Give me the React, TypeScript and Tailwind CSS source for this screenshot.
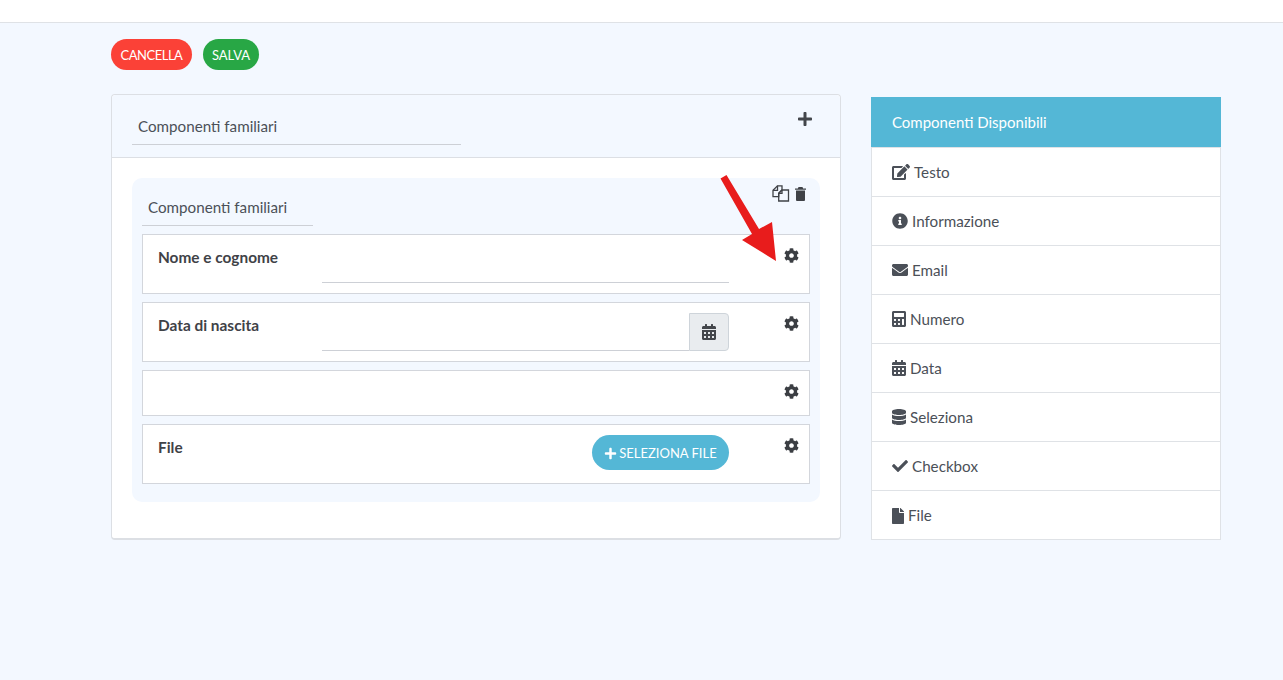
import type { ReactNode } from 'react';
import { FaCalculator, FaCalendarAlt, FaCheck, FaCog, FaDatabase, FaEdit, FaEnvelope, FaFile, FaInfoCircle, FaPlus } from 'react-icons/fa';

const available = [
  { label: 'Testo', icon: <FaEdit className="w-[18px] h-[16px]" /> },
  { label: 'Informazione', icon: <FaInfoCircle className="w-[16px] h-[16px]" /> },
  { label: 'Email', icon: <FaEnvelope className="w-[16px] h-[16px]" /> },
  { label: 'Numero', icon: <FaCalculator className="w-[14px] h-[16px]" /> },
  { label: 'Data', icon: <FaCalendarAlt className="w-[14px] h-[16px]" /> },
  { label: 'Seleziona', icon: <FaDatabase className="w-[14px] h-[16px]" /> },
  { label: 'Checkbox', icon: <FaCheck className="w-[16px] h-[16px]" /> },
  { label: 'File', icon: <FaFile className="w-[12px] h-[16px]" /> },
];

const CopyIcon = () => (
  <svg width="18" height="17" viewBox="0 0 18 17" fill="none" stroke="currentColor" strokeWidth="1.3">
    <path d="M5.5 .8h4.5v4.2L6.7 8.3v3.4H1V5.3z" />
    <path d="M5.5 .8v4.5H1" />
    <path d="M10 5h6.5v11H6.7V8.3z" />
    <path d="M10 5v3.3H6.7" />
  </svg>
);

const TrashIcon = () => (
  <svg width="11" height="14" viewBox="0 0 11 14" fill="currentColor">
    <path d="M3.5 0h4l.6 1.5H11v1.3H0V1.5h2.9z" />
    <path d="M1 3.6h9V13a1 1 0 0 1-1 1H2a1 1 0 0 1-1-1z" />
  </svg>
);

const Row = ({ label, height, children }: { label?: string; height: string; children?: ReactNode }) => (
  <div className={`relative flex bg-white border border-[#d3d6dc] ${height}`}>
    {label && <div className="w-[179px] shrink-0 pl-[15px] pt-[11px] text-[15.4px] leading-[22px] font-bold text-[#3f4247]">{label}</div>}
    {children}
    <FaCog size={15} className="absolute top-[13px] right-[10px] text-[#3b3e43]" />
  </div>
);

export default function App() {
  return (
    <div className="min-h-[680px] bg-[#f3f8ff] text-[#4b5058] [font-family:Lato,'Open_Sans',sans-serif]">
      <div className="h-[23px] bg-white border-b border-[#dfe2e6]" />

      <div className="relative pl-[111px] pt-[16px]">
        <div className="flex gap-[11px]">
          <button className="h-[31px] w-[81px] pt-[2px] rounded-full bg-[#fb4137] text-[13px] tracking-[-0.5px] text-white">CANCELLA</button>
          <button className="h-[31px] w-[56px] pt-[2px] rounded-full bg-[#28a745] text-[13px] text-white">SALVA</button>
        </div>

        <div className="flex items-start gap-[30px] mt-[24px]">
          <div className="w-[730px] h-[446px] rounded-[4px] bg-white border border-[#dcdfe4] border-b-2">
            <div className="relative h-[63px] bg-[#f3f8ff] border-b border-[#dcdfe4] pl-[20px] pt-[17px] rounded-t-[4px]">
              <div className="w-[329px] h-[33px] border-b border-[#cdd0d6] pl-[6px] text-[15.2px] leading-[28px]">Componenti familiari</div>
              <FaPlus size={16} className="absolute top-[16px] right-[27px] text-[#43464b]" />
            </div>

            <div className="relative mx-[20px] mt-[20px] h-[324px] rounded-[10px] bg-[#f3f8ff] px-[10px] pt-[14px]">
              <div className="absolute top-[7px] right-[14px] flex items-center gap-[5px] text-[#3f4247]">
                <CopyIcon />
                <TrashIcon />
              </div>
              <div className="w-[171px] h-[34px] border-b border-[#cdd0d6] pl-[6px] text-[15.2px] leading-[30px]">Componenti familiari</div>
              <div className="flex flex-col gap-[8px] mt-[8px]">
                <Row label="Nome e cognome" height="h-[60px]">
                  <div className="w-[407px] h-[48px] border-b border-[#cdd0d6]" />
                </Row>
                <Row label="Data di nascita" height="h-[60px]">
                  <div className="w-[367px] h-[48px] border-b border-[#cdd0d6]" />
                  <div className="w-[40px] h-[38px] mt-[10px] flex items-center justify-center rounded-r-[4px] bg-[#e9ecef] border border-[#ced4da] text-[#43464b]">
                    <FaCalendarAlt className="w-[14px] h-[16px]" />
                  </div>
                </Row>
                <Row height="h-[46px]" />
                <Row label="File" height="h-[60px]">
                  <button className="absolute top-[10px] left-[449px] w-[137px] h-[35px] pt-[2px] flex items-center justify-center gap-[2px] rounded-full bg-[#54b7d6] text-[13px] text-white">
                    <FaPlus size={13} />
                    SELEZIONA FILE
                  </button>
                </Row>
              </div>
            </div>
          </div>

          <div className="w-[350px] mt-[3px]">
            <div className="h-[50px] bg-[#54b7d6] pl-[21px] text-[15px] leading-[50px] text-white">Componenti Disponibili</div>
            <div className="h-[393px] bg-white border border-[#dfe2e6] divide-y divide-[#dfe2e6] overflow-hidden">
              {available.map((item) => (
                <div key={item.label} className="h-[49px] flex items-center gap-[4px] pl-[20px] text-[15.2px]">
                  {item.icon}
                  <span>{item.label}</span>
                </div>
              ))}
            </div>
          </div>
        </div>

        {/* annotation drawn over the screenshot */}
        <svg className="absolute top-[150px] left-[715px]" width="70" height="95" viewBox="0 0 70 95">
          <path d="M5.5 5.5 L11.5 2 L44 56 L57 49 L61 88 L27 67 L37 61 Z" fill="#e81c1c" />
        </svg>
      </div>
    </div>
  );
}
